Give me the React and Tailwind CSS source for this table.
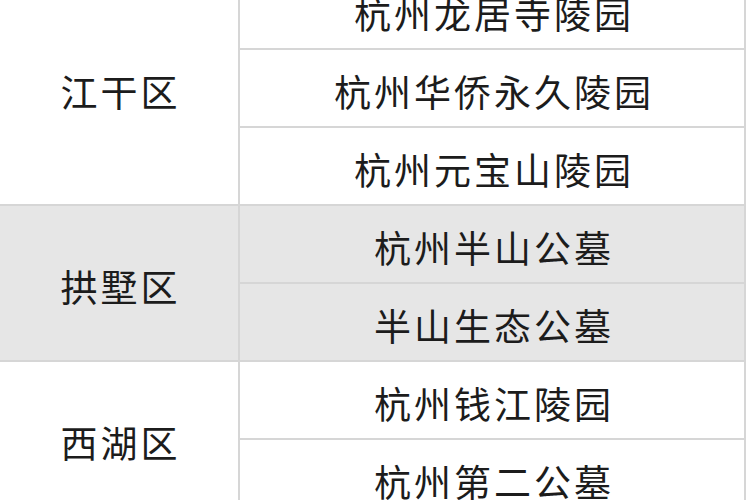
const groups = [
  { name: '江干区', bg: 'bg-white', rows: ['杭州龙居寺陵园', '杭州华侨永久陵园', '杭州元宝山陵园'] },
  { name: '拱墅区', bg: 'bg-[#e6e6e6]', rows: ['杭州半山公墓', '半山生态公墓'] },
  { name: '西湖区', bg: 'bg-white', rows: ['杭州钱江陵园', '杭州第二公墓'] },
];

export default function App() {
  return (
    <div
      className="w-[750px] h-[500px] overflow-hidden bg-white text-[#1c1c1c]"
      style={{ fontFamily: '"Noto Sans CJK SC", "Noto Sans", sans-serif' }}
    >
      <div className="-mt-[28px] w-[746px] border-r-2 border-[#d6d6d6]">
        {groups.map((g) => (
          <div key={g.name} className={`flex border-b-2 border-[#d6d6d6] ${g.bg}`}>
            {/* 区名 */}
            <div className="w-[240px] shrink-0 border-r-2 border-[#d6d6d6] flex items-center justify-center pt-[8px] pl-[3px] text-[37px] tracking-[3px]">
              {g.name}
            </div>
            {/* 陵园列表 */}
            <div className="flex-1 flex flex-col">
              {g.rows.map((r, i) => (
                <div
                  key={r}
                  className={`flex items-center justify-center pt-[7px] pl-[4px] text-[37px] tracking-[3px] ${
                    i < g.rows.length - 1 ? 'h-[78px] border-b-2 border-[#d6d6d6]' : 'h-[76px]'
                  }`}
                >
                  {r}
                </div>
              ))}
            </div>
          </div>
        ))}
      </div>
    </div>
  );
}
